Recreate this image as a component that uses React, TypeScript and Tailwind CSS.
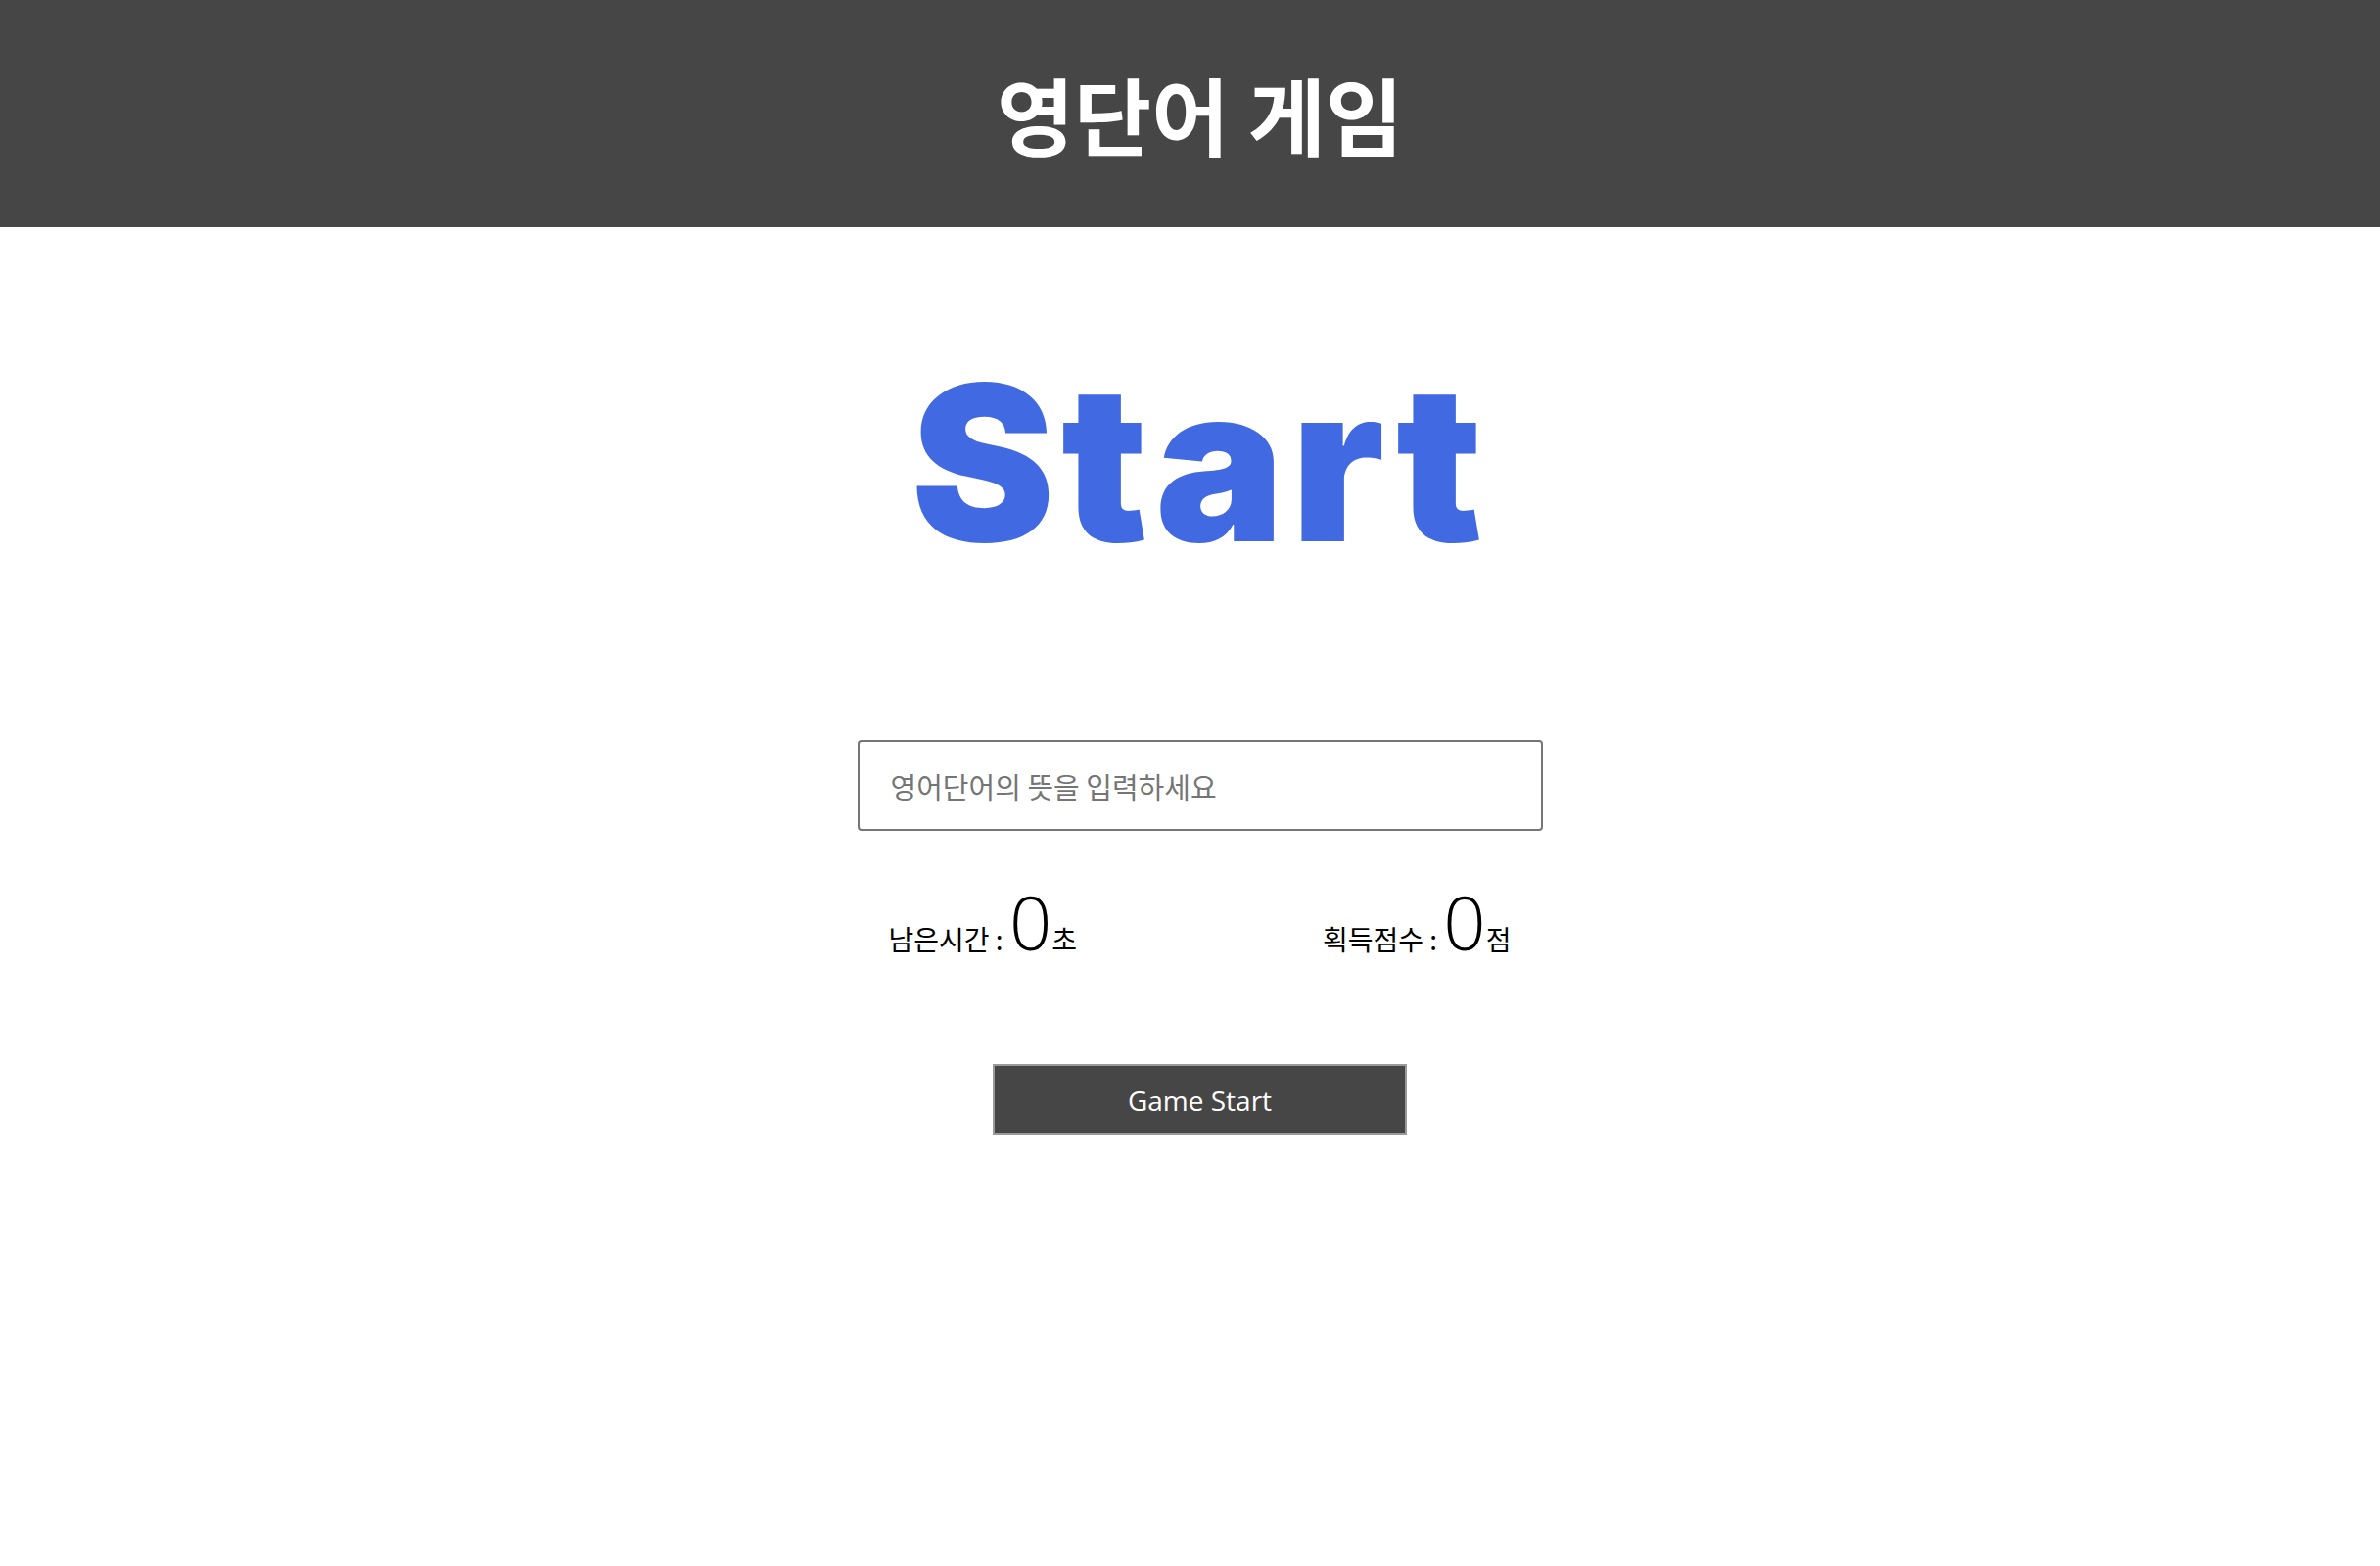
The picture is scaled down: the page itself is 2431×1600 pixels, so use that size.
export default function App() {
  return (
    <div className="min-h-screen bg-white font-['Noto_Sans_CJK_KR',sans-serif]">
      <header className="flex h-[232px] items-center justify-center bg-[#464646] pl-5">
        <h1 className="text-[86px] font-bold leading-none text-white">영단어 게임</h1>
      </header>

      <main className="flex flex-col items-center pl-5">
        <h2 className="mt-[130px] font-['Inter',sans-serif] text-[221px] font-black leading-none tracking-[0.03em] text-[#4169e1]">
          Start
        </h2>

        <input
          type="text"
          placeholder="영어단어의 뜻을 입력하세요"
          className="mt-[173px] h-[93px] w-[700px] rounded-[4px] border-2 border-[#767676] px-8 text-[29px] text-black outline-none placeholder:text-[#757575]"
        />

        <div className="mt-[55px] flex w-[700px] items-baseline justify-between px-8 text-[28px] text-black">
          <div className="flex items-baseline">
            <span>남은시간 :&nbsp;</span>
            <span className="font-['Open_Sans',sans-serif] text-[76px] font-light leading-none">0</span>
            <span>초</span>
          </div>
          <div className="flex items-baseline">
            <span>획득점수 :&nbsp;</span>
            <span className="font-['Open_Sans',sans-serif] text-[76px] font-light leading-none">0</span>
            <span>점</span>
          </div>
        </div>

        <button
          type="button"
          className="mt-[107px] h-[73px] w-[423px] border-2 border-[#9a9a9a] bg-[#464646] font-['Open_Sans',sans-serif] text-[28px] text-white"
        >
          Game Start
        </button>
      </main>
    </div>
  );
}
